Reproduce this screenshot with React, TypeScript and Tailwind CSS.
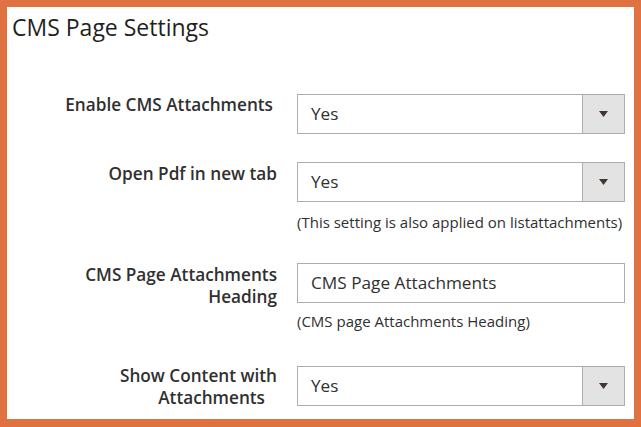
import { ReactNode } from 'react';

type FieldRowProps = {
  label: ReactNode;
  labelClass?: string;
  note?: string;
  noteClass?: string;
  className?: string;
  children: ReactNode;
};

function FieldRow({ label, labelClass = '', note, noteClass = '', className = '', children }: FieldRowProps) {
  return (
    <div className={`flex items-start gap-5 ${className}`}>
      <div className={`w-[270px] shrink-0 text-right text-[17.2px] font-semibold leading-[22px] text-[#303030] ${labelClass}`}>
        {label}
      </div>
      <div className="w-[328px]">
        {children}
        {note && <p className={`whitespace-nowrap text-[15px] leading-[20px] text-[#303030] ${noteClass}`}>{note}</p>}
      </div>
    </div>
  );
}

function SelectBox({ value }: { value: string }) {
  return (
    <div className="flex h-10 w-full border border-[#adadad] bg-white">
      <div className="flex flex-1 items-center pl-[13px] text-[17.2px] text-[#303030]">{value}</div>
      <div className="flex w-[42px] items-center justify-center border-l border-[#adadad] bg-[#e3e3e3]">
        <svg width="9" height="6" viewBox="0 0 9 6">
          <path d="M0 0h9L4.5 6z" fill="#41362f" />
        </svg>
      </div>
    </div>
  );
}

export default function App() {
  return (
    <div
      className="h-[427px] w-[641px] border-[7px] border-b-8 border-[#e07241] bg-white"
      style={{ fontFamily: '"Open Sans", "Noto Sans", sans-serif' }}
    >
      <h1 className="pl-[5px] pt-[5px] text-[23px] font-normal leading-[30px] text-[#1f1f1f]">CMS Page Settings</h1>

      <FieldRow className="mt-[52px]" label="Enable CMS Attachments" labelClass="pr-[4px]">
        <SelectBox value="Yes" />
      </FieldRow>

      <FieldRow
        className="mt-[28px]"
        label="Open Pdf in new tab"
        labelClass="mt-px"
        note="(This setting is also applied on listattachments)"
        noteClass="mt-[10px]"
      >
        <SelectBox value="Yes" />
      </FieldRow>

      <FieldRow
        className="mt-[31px]"
        label={
          <>
            CMS Page Attachments
            <br />
            Heading
          </>
        }
        labelClass="mt-px"
        note="(CMS page Attachments Heading)"
        noteClass="mt-[8px]"
      >
        <div className="flex h-10 w-full items-center border border-[#adadad] bg-white pl-[13px] text-[17.2px] text-[#303030]">
          CMS Page Attachments
        </div>
      </FieldRow>

      <FieldRow
        className="mt-[35px]"
        label={
          <>
            Show Content with
            <br />
            <span className="pr-[12px]">Attachments</span>
          </>
        }
        labelClass="mt-[-1px]"
      >
        <SelectBox value="Yes" />
      </FieldRow>
    </div>
  );
}
